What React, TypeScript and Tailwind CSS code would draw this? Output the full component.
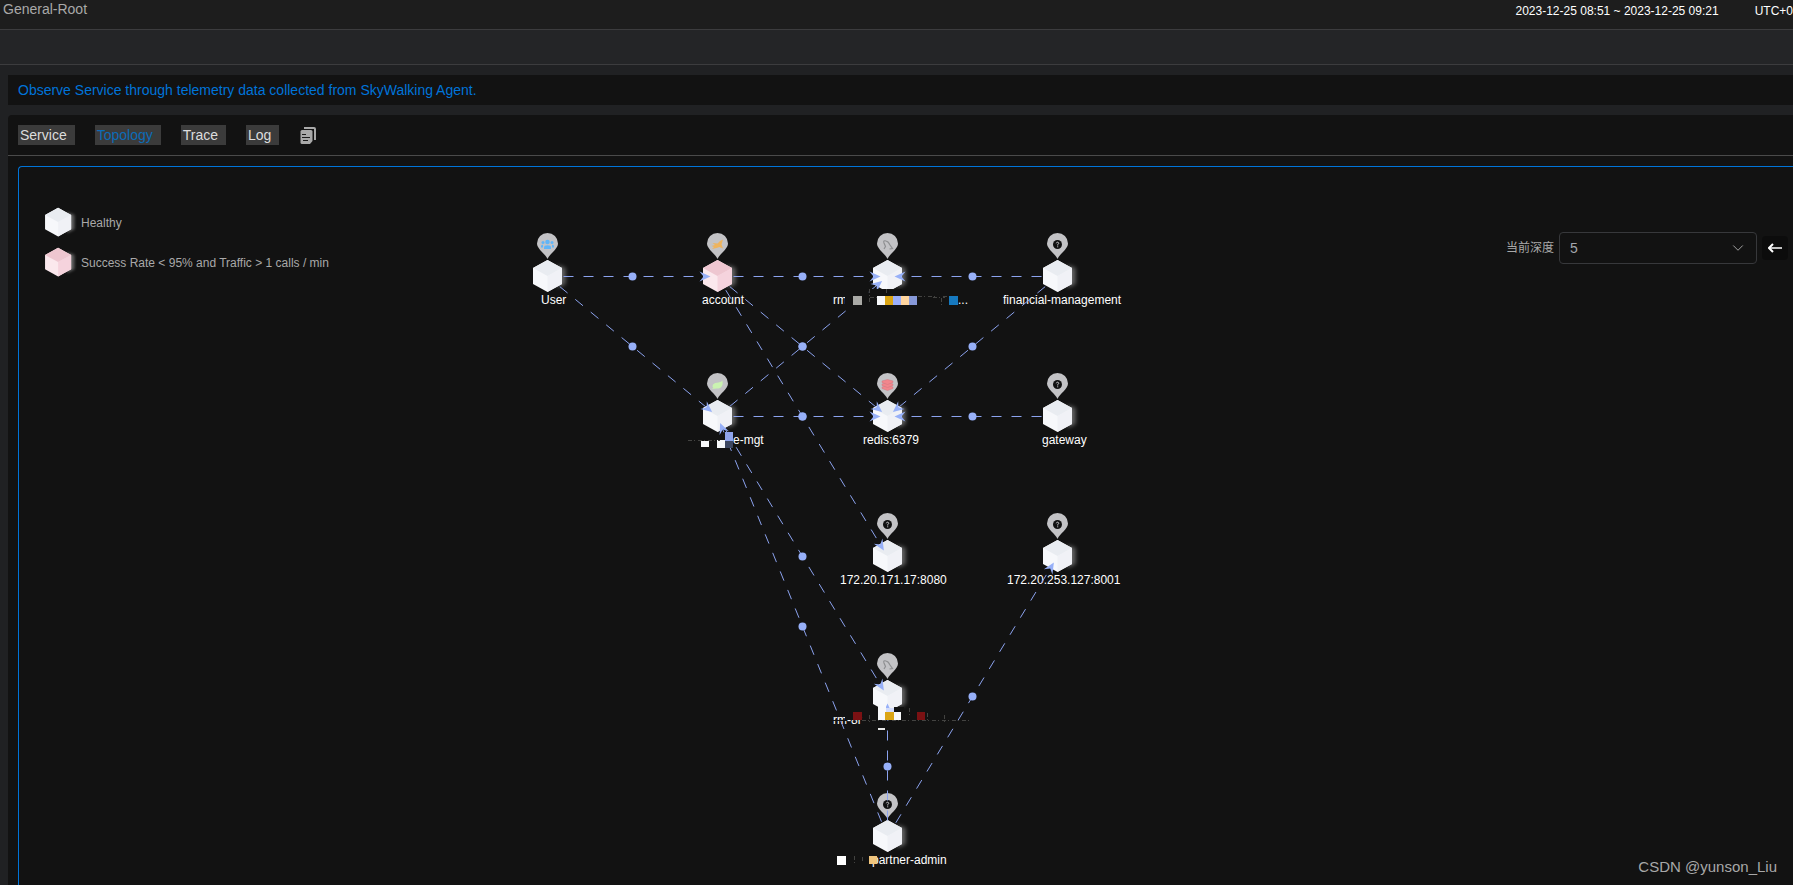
import { useState } from "react";
import { ChevronDown } from "lucide-react";

type IconType = "users" | "bird" | "dolphin" | "unknown" | "leaf" | "redis";

interface TopologyNode {
  id: string;
  label: string;
  x: number;
  y: number;
  labelX: number;
  icon: IconType;
  error?: boolean;
}

interface Block {
  x: number;
  y: number;
  w: number;
  h: number;
  fill: string;
}

const nodes: TopologyNode[] = [
  { id: "user", label: "User", x: 528, y: 109, labelX: 522, icon: "users" },
  { id: "account", label: "account", x: 698, y: 109, labelX: 683, icon: "bird", error: true },
  { id: "rm1", label: "rm", x: 868, y: 109, labelX: 814, icon: "dolphin" },
  { id: "financial", label: "financial-management", x: 1038, y: 109, labelX: 984, icon: "unknown" },
  { id: "mgt", label: "e-mgt", x: 698, y: 249, labelX: 714, icon: "leaf" },
  { id: "redis", label: "redis:6379", x: 868, y: 249, labelX: 844, icon: "redis" },
  { id: "gateway", label: "gateway", x: 1038, y: 249, labelX: 1023, icon: "unknown" },
  { id: "ip1", label: "172.20.171.17:8080", x: 868, y: 389, labelX: 821, icon: "unknown" },
  { id: "ip2", label: "172.20.253.127:8001", x: 1038, y: 389, labelX: 988, icon: "unknown" },
  { id: "rm2", label: "rm-8r", x: 868, y: 529, labelX: 814, icon: "dolphin" },
  { id: "partner", label: "partner-admin", x: 868, y: 669, labelX: 853, icon: "unknown" },
];

const edges = [
  { from: "user", to: "account" },
  { from: "user", to: "mgt" },
  { from: "account", to: "rm1" },
  { from: "account", to: "redis" },
  { from: "account", to: "ip1" },
  { from: "financial", to: "rm1" },
  { from: "financial", to: "redis" },
  { from: "gateway", to: "redis" },
  { from: "mgt", to: "rm1" },
  { from: "mgt", to: "redis" },
  { from: "mgt", to: "rm2" },
  { from: "partner", to: "mgt" },
  { from: "partner", to: "rm2" },
  { from: "partner", to: "ip2" },
];

// masked parts of the long service names
const blocks: Block[] = [
  { x: 826, y: 128, w: 8, h: 12, fill: "#121212" },
  { x: 834, y: 129, w: 9, h: 9, fill: "#a9a9a5" },
  { x: 851, y: 122, w: 32, h: 7, fill: "#121212" },
  { x: 858, y: 129, w: 9, h: 9, fill: "#f7f8fa" },
  { x: 866, y: 129, w: 9, h: 9, fill: "#dba514" },
  { x: 874, y: 129, w: 9, h: 9, fill: "#9aaffb" },
  { x: 882, y: 129, w: 8, h: 9, fill: "#ffd59f" },
  { x: 890, y: 129, w: 8, h: 9, fill: "#8698d8" },
  { x: 930, y: 129, w: 9, h: 9, fill: "#1679bf" },
  { x: 682, y: 274, w: 8, h: 6, fill: "#f7f8fa" },
  { x: 698, y: 273, w: 8, h: 8, fill: "#f7f8fa" },
  { x: 706, y: 265, w: 8, h: 9, fill: "#8fa4ec" },
  { x: 706, y: 274, w: 8, h: 7, fill: "#3d4761" },
  { x: 812, y: 553, w: 16, h: 1, fill: "#121212" },
  { x: 826, y: 545, w: 8, h: 8, fill: "#121212" },
  { x: 834, y: 545, w: 9, h: 8, fill: "#7b1113" },
  { x: 852, y: 540, w: 7, h: 8, fill: "#121212" },
  { x: 875, y: 540, w: 10, h: 5, fill: "#121212" },
  { x: 859, y: 537, w: 8, h: 16, fill: "#f7f8fa" },
  { x: 867, y: 541, w: 8, h: 4, fill: "#d3dcfb" },
  { x: 866, y: 545, w: 9, h: 8, fill: "#dba514" },
  { x: 875, y: 545, w: 7, h: 8, fill: "#f7f8fa" },
  { x: 866, y: 554, w: 6, h: 6, fill: "#121212" },
  { x: 859, y: 561, w: 7, h: 2, fill: "#e8e8e8" },
  { x: 898, y: 545, w: 8, h: 8, fill: "#7b1113" },
  { x: 818, y: 689, w: 9, h: 9, fill: "#ffffff" },
  { x: 850, y: 689, w: 8, h: 8, fill: "#f0c57e" },
];

const specks = [
  "M851 130.5h7 M850.500 131v6 M850.500 122v8 M867.500 122v6",
  "M899 129.500h18 M914 130.500h12 M924 129.500h6",
  "M922.500 131v7",
  "M669 273.500h32",
  "M843 553.500h110",
  "M850.500 548v8 M890.500 541v10 M908.500 546v8 M925.500 548v8",
  "M835.500 689v8 M843.500 690v6",
];

const tabs = ["Service", "Topology", "Trace", "Log"];

function Cube({ error }: { error?: boolean }) {
  return (
    <g>
      <path
        d="M10 -11 L18 -8 L18 8 L10 12Z"
        fill="#ffffff"
        opacity="0.35"
        filter="url(#cube-glow)"
      />
      <path d="M0 -16 L14.500 -8 L14.500 8 L0 16 L-14.500 8 L-14.500 -8Z" fill={error ? "#fbe8ed" : "#f7f8fb"} />
      <path d="M0 0 L14.500 -8 L14.500 8 L0 16Z" fill={error ? "#f5d3dd" : "#f0f1f6"} />
      <path d="M0 -16 L14.500 -8 L0 0 L-14.500 -8Z" fill={error ? "#eec6d0" : "#e9ecf1"} />
    </g>
  );
}

function PinIcon({ icon }: { icon: IconType }) {
  switch (icon) {
    case "users":
      return (
        <g fill="#61b5f7">
          <circle cx="0" cy="-2.500" r="2.300" />
          <circle cx="-4.500" cy="-2" r="1.500" />
          <circle cx="4.500" cy="-2" r="1.500" />
          <path d="M-3.500 4.500V3Q-3.500 0.800 0 0.800T3.500 3V4.500Z" />
          <path d="M-6.500 3V1.500Q-6 0 -4.500 0.300V3Z" />
          <path d="M6.500 3V1.500Q6 0 4.500 0.300V3Z" />
        </g>
      );
    case "bird":
      return (
        <path
          d="M5.500 -5 L4 0 L5.500 4 L2 2.500 L-1 3.500 L-5.500 4.500 L-3.500 2.500 L-6 1.500 L-2.500 0.500 L-5 -1.500 L0 -1 L2.500 -3.500Z"
          fill="#eeb45e"
        />
      );
    case "dolphin":
      return (
        <path
          d="M-3.500 4.500 L-2 2 L-3.500 -1.500 Q-4.500 -4.500 -1.500 -3.500 Q1 -3 2.500 0.500 L5 4 L2 4.500"
          fill="none"
          stroke="#8e8f91"
          strokeWidth="1.200"
        />
      );
    case "leaf":
      return (
        <g>
          <path d="M5 -4 Q6 3 1 4 H-3 Q-6 3 -4.500 0 Q-3 -2 1 -2 Q4 -2.500 5 -4Z" fill="#caf3b1" />
          <path d="M-5 4 L-1 3" stroke="#caf3b1" />
        </g>
      );
    case "redis":
      return (
        <g fill="#f1868d" stroke="#cf7780" strokeWidth="0.500">
          <path d="M0 1 L5.500 2.500 V4 L0 6 L-5.500 4 V2.500Z" />
          <path d="M0 -2 L5.500 -0.500 V1 L0 3 L-5.500 1 V-0.500Z" />
          <path d="M0 -5 L5.500 -3.500 V-2 L0 0 L-5.500 -2 V-3.500Z" />
        </g>
      );
    default:
      return (
        <g>
          <circle r="4.500" fill="#111111" />
          <path
            d="M-1.200 -1.200 Q-1 -2.300 0.200 -2.300 Q1.500 -2 1.200 -0.800 L0.200 0.200 V1 M0.200 1.800V2.800"
            fill="none"
            stroke="#c6c6c8"
          />
        </g>
      );
  }
}

function NodeMark({ node }: { node: TopologyNode }) {
  return (
    <g transform={`translate(${node.x + 0.5} ${node.y})`}>
      <Cube error={node.error} />
      <path
        d="M0 -17 C-2 -22 -10.500 -27 -10.500 -32.500 A10.500 10.500 0 0 1 10.500 -32.500 C10.500 -27 2 -22 0 -17Z"
        fill="#c3c3c6"
      />
      <g transform="translate(0 -31.5)">
        <PinIcon icon={node.icon} />
      </g>
    </g>
  );
}

function Edge({ from, to }: { from: TopologyNode; to: TopologyNode }) {
  const dx = to.x - from.x;
  const dy = to.y - from.y;
  const len = Math.hypot(dx, dy);
  const ux = dx / len;
  const uy = dy / len;
  const angle = (Math.atan2(dy, dx) * 180) / Math.PI;

  return (
    <g>
      <line
        x1={from.x + ux * 16}
        y1={from.y + uy * 16}
        x2={to.x - ux * 11}
        y2={to.y - uy * 11}
        stroke="#8ba2ee"
        strokeDasharray="10 10"
      />
      <path
        d="M0 0 L-11 -5 L-7 0 L-11 5Z"
        fill="#97b0f8"
        transform={`translate(${to.x - ux * 7} ${to.y - uy * 7}) rotate(${angle})`}
      />
      <circle cx={from.x + dx / 2} cy={from.y + dy / 2} r="4" fill="#97b0f8" />
    </g>
  );
}

function Topology() {
  const find = (id: string) => nodes.find((n) => n.id === id)!;

  return (
    <svg
      className="absolute inset-0 h-full w-full"
      role="img"
      aria-label="Service topology"
    >
      <defs>
        <filter id="cube-glow" x="-100%" y="-50%" width="300%" height="200%">
          <feGaussianBlur stdDeviation="2" />
        </filter>
      </defs>

      {nodes.map((node) => (
        <NodeMark key={node.id} node={node} />
      ))}

      {nodes.map((node) => (
        <text
          key={node.id}
          x={node.labelX}
          y={node.y + 28}
          fill="#ffffff"
          className="text-[12px]"
        >
          {node.label}
        </text>
      ))}
      <text x="939" y="137" fill="#ffffff" className="text-[12px]">
        ...
      </text>

      {/* half a pixel keeps the one pixel strokes sharp */}
      <g transform="translate(0.5 0.5)">
        {edges.map((edge) => (
          <Edge
            key={`${edge.from}-${edge.to}`}
            from={find(edge.from)}
            to={find(edge.to)}
          />
        ))}
      </g>

      {blocks.map((b, index) => (
        <rect key={index} x={b.x} y={b.y} width={b.w} height={b.h} fill={b.fill} />
      ))}
      {specks.map((d) => (
        <path
          key={d}
          d={d}
          fill="none"
          stroke="#434341"
          strokeDasharray="4 2 1 3"
        />
      ))}
    </svg>
  );
}

function LegendItem({ label, error }: { label: string; error?: boolean }) {
  return (
    <li className="flex h-10 items-center gap-1">
      <svg width="36" height="36" viewBox="-19 -19 40 40" aria-hidden="true">
        <Cube error={error} />
      </svg>
      <span>{label}</span>
    </li>
  );
}

export default function App() {
  const [active, setActive] = useState("Topology");
  const [depth, setDepth] = useState("5");

  return (
    <div className="flex min-h-screen flex-col overflow-hidden bg-[#202123] font-['Liberation_Sans','Noto_Sans_CJK_SC',sans-serif] text-[#a9a9a9]">
      {/* HEADER */}
      <header className="flex h-[30px] justify-between border-b border-[#3c3c3e] bg-[#1d1d1d]">
        <h1 className="pl-[3px] text-sm leading-[18px]">General-Root</h1>
        <div className="flex gap-9 text-xs leading-[22px] whitespace-nowrap text-white">
          <time>2023-12-25 08:51 ~ 2023-12-25 09:21</time>
          <span>UTC+0</span>
        </div>
      </header>

      {/* TOOLBAR */}
      <div className="h-[35px] border-b border-[#3c3c3e] bg-[#242527]" />

      <main className="flex flex-1 flex-col gap-2.5 pt-2.5 pl-2">
        <p className="bg-[#121212] px-2.5 text-sm leading-[30px] text-[#0074d9]">
          Observe Service through telemetry data collected from SkyWalking Agent.
        </p>

        <section className="flex flex-1 flex-col rounded-tl bg-[#121212]">
          {/* TABS */}
          <nav className="flex h-[41px] items-center gap-5 border-b border-[#4a4a4a] px-2.5 text-sm">
            {tabs.map((tab) => (
              <button
                key={tab}
                type="button"
                onClick={() => setActive(tab)}
                className={`h-5 bg-[#3b3b3b] pr-2 pl-0.5 leading-5 ${
                  active === tab ? "text-[#0b6cb8]" : "text-[#dddddd]"
                }`}
              >
                {tab}
              </button>
            ))}
            <button type="button" aria-label="Copy dashboard">
              <svg width="18" height="18" viewBox="0 0 18 18">
                <path d="M5 1H15Q17 1 17 3V14H15V3H5Z" fill="#a9a9a9" />
                <path
                  d="M3 4H12Q13.500 4 13.500 5.500V15L11 18H3Q1.500 18 1.500 16.500V5.500Q1.500 4 3 4Z"
                  fill="#a9a9a9"
                />
                <path d="M3 8.500H7M3 11.500H11M4 14.500H9" stroke="#1b1b1b" />
              </svg>
            </button>
          </nav>

          {/* TOPOLOGY */}
          <div className="relative mt-2.5 ml-2.5 flex min-h-[718px] flex-1 items-start justify-between rounded-tl-sm border-t border-l border-[#0074d9]">
            <Topology />

            <ul className="relative mt-9 ml-[22px] text-xs">
              <LegendItem label="Healthy" />
              <LegendItem label="Success Rate < 95% and Traffic > 1 calls / min" error />
            </ul>

            <div className="relative mt-[65px] mr-[5px] flex items-center gap-[5px]">
              <label htmlFor="depth" className="text-xs">
                当前深度
              </label>
              <div className="relative flex items-center">
                <select
                  id="depth"
                  value={depth}
                  onChange={(e) => setDepth(e.target.value)}
                  className="h-8 w-[198px] appearance-none rounded border border-[#37383b] bg-[#121212] px-2.5 text-sm text-[#a3a6ad]"
                >
                  {["1", "2", "3", "4", "5"].map((n) => (
                    <option key={n}>{n}</option>
                  ))}
                </select>
                <ChevronDown
                  size={18}
                  strokeWidth={1.25}
                  className="pointer-events-none absolute right-2.5"
                />
              </div>
              <button
                type="button"
                aria-label="Back"
                className="flex h-6 w-[26px] items-center justify-center rounded-sm bg-[#0c0c0c] text-white"
              >
                <svg width="14" height="10" viewBox="0 0 14 10" fill="none" stroke="currentColor">
                  <path d="M14 5H1.500" strokeWidth="1.500" />
                  <path d="M5 1L1 5L5 9" strokeWidth="2" />
                </svg>
              </button>
            </div>

            <span className="absolute right-4 bottom-2 text-[15px] leading-5 text-[#a8a8a8]">
              CSDN @yunson_Liu
            </span>
          </div>
        </section>
      </main>
    </div>
  );
}
